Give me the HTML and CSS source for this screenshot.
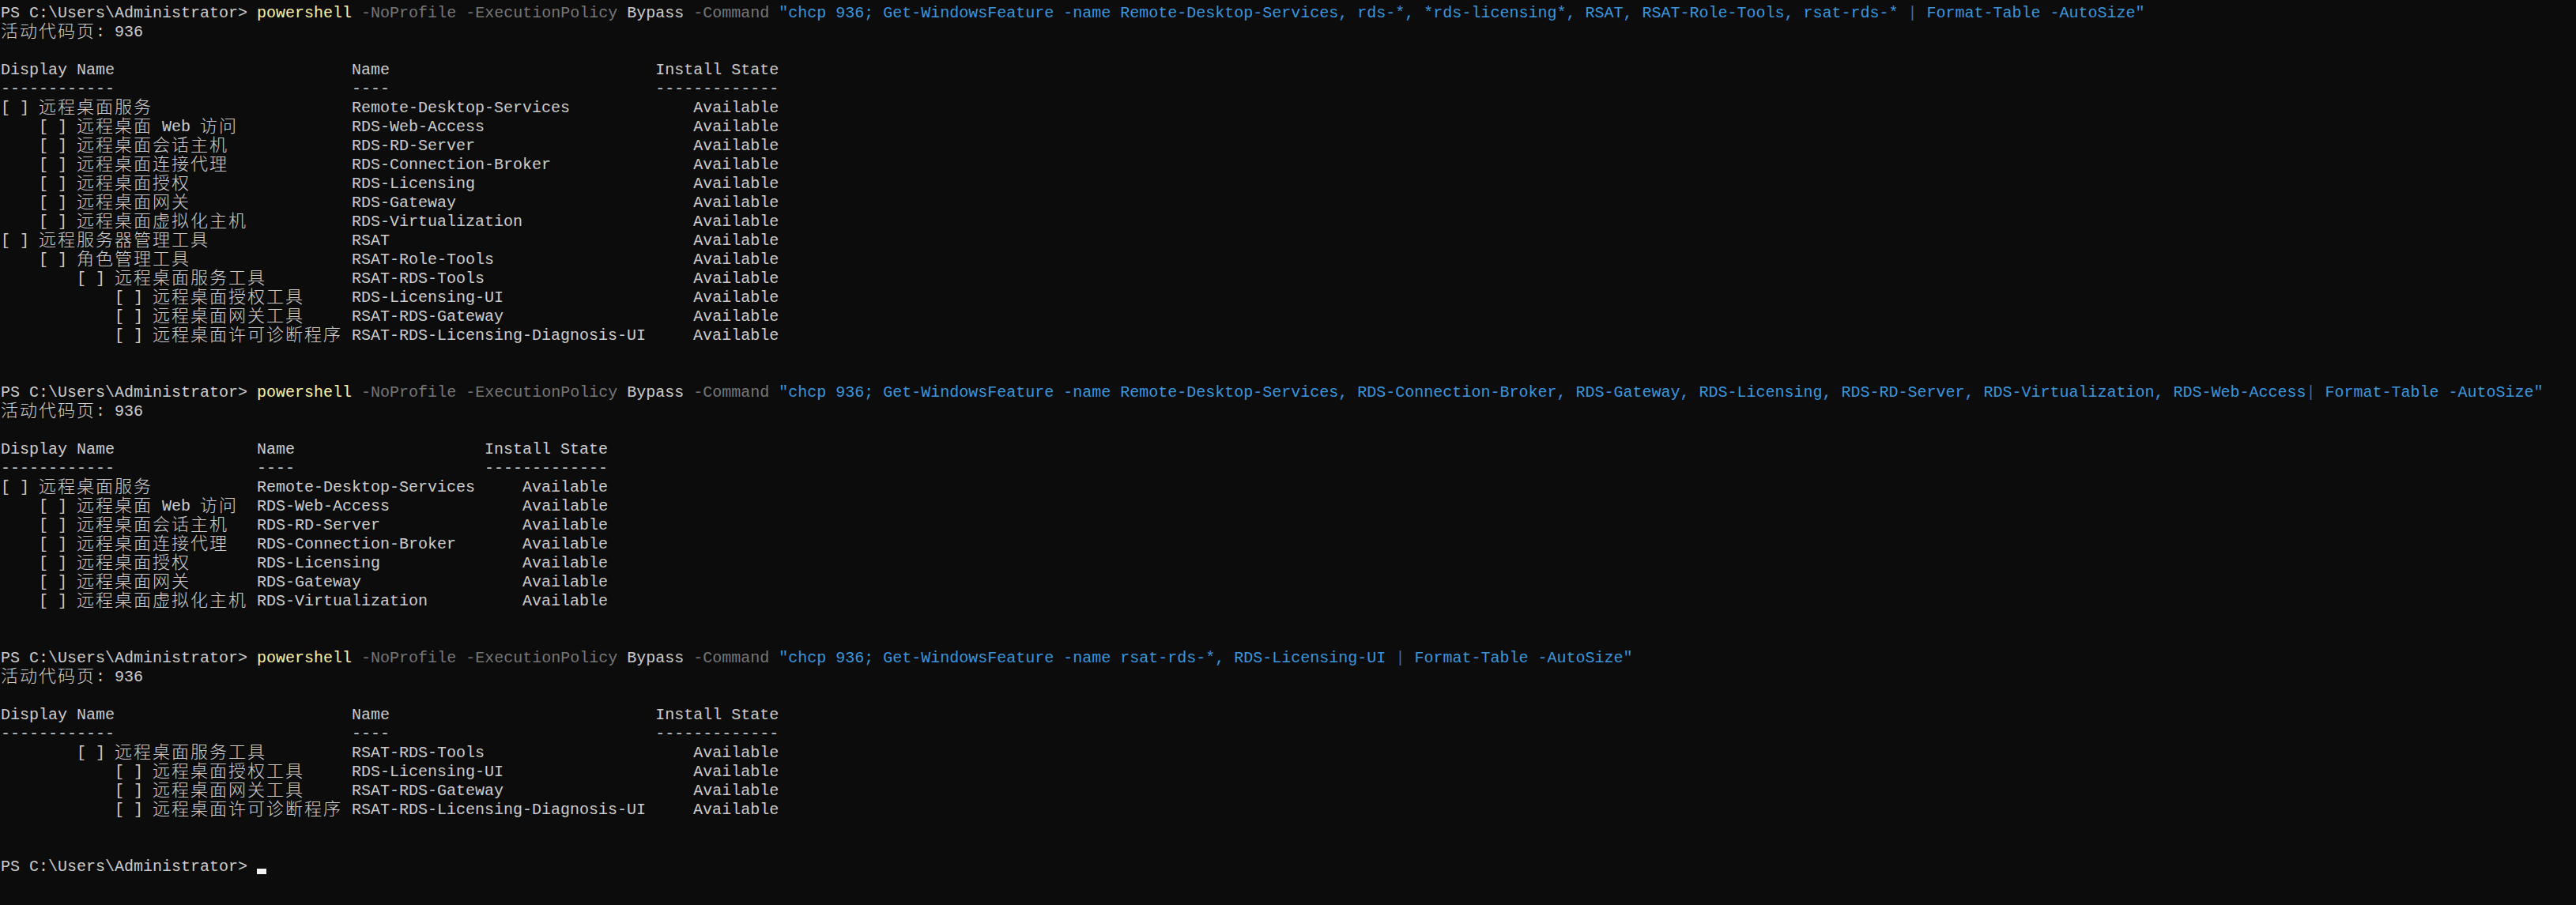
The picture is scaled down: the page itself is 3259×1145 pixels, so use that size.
FILE: index.html
```html
<!DOCTYPE html>
<html lang="zh-CN">
<head>
<meta charset="utf-8">
<title>Windows PowerShell</title>
<link rel="stylesheet" href="styles.css">
</head>
<body>
<main class="term">
<div class="l">PS C:\Users\Administrator&gt; <span class="y">powershell</span> <span class="g">-NoProfile</span> <span class="g">-ExecutionPolicy</span> Bypass <span class="g">-Command</span> <span class="s">"chcp 936; Get-WindowsFeature -name Remote-Desktop-Services, rds-*, *rds-licensing*, RSAT, RSAT-Role-Tools, rsat-rds-* <span class="p">|</span> Format-Table -AutoSize"</span></div>
<div class="l"><span class="z">活动代码页</span>: 936</div>
<div class="l"></div>
<div class="l">Display Name                         Name                            Install State</div>
<div class="l">------------                         ----                            -------------</div>
<div class="l">[ ] <span class="z">远程桌面服务</span>                     Remote-Desktop-Services             Available</div>
<div class="l">    [ ] <span class="z">远程桌面</span> Web <span class="z">访问</span>            RDS-Web-Access                      Available</div>
<div class="l">    [ ] <span class="z">远程桌面会话主机</span>             RDS-RD-Server                       Available</div>
<div class="l">    [ ] <span class="z">远程桌面连接代理</span>             RDS-Connection-Broker               Available</div>
<div class="l">    [ ] <span class="z">远程桌面授权</span>                 RDS-Licensing                       Available</div>
<div class="l">    [ ] <span class="z">远程桌面网关</span>                 RDS-Gateway                         Available</div>
<div class="l">    [ ] <span class="z">远程桌面虚拟化主机</span>           RDS-Virtualization                  Available</div>
<div class="l">[ ] <span class="z">远程服务器管理工具</span>               RSAT                                Available</div>
<div class="l">    [ ] <span class="z">角色管理工具</span>                 RSAT-Role-Tools                     Available</div>
<div class="l">        [ ] <span class="z">远程桌面服务工具</span>         RSAT-RDS-Tools                      Available</div>
<div class="l">            [ ] <span class="z">远程桌面授权工具</span>     RDS-Licensing-UI                    Available</div>
<div class="l">            [ ] <span class="z">远程桌面网关工具</span>     RSAT-RDS-Gateway                    Available</div>
<div class="l">            [ ] <span class="z">远程桌面许可诊断程序</span> RSAT-RDS-Licensing-Diagnosis-UI     Available</div>
<div class="l"></div>
<div class="l"></div>
<div class="l">PS C:\Users\Administrator&gt; <span class="y">powershell</span> <span class="g">-NoProfile</span> <span class="g">-ExecutionPolicy</span> Bypass <span class="g">-Command</span> <span class="s">"chcp 936; Get-WindowsFeature -name Remote-Desktop-Services, RDS-Connection-Broker, RDS-Gateway, RDS-Licensing, RDS-RD-Server, RDS-Virtualization, RDS-Web-Access<span class="p">|</span> Format-Table -AutoSize"</span></div>
<div class="l"><span class="z">活动代码页</span>: 936</div>
<div class="l"></div>
<div class="l">Display Name               Name                    Install State</div>
<div class="l">------------               ----                    -------------</div>
<div class="l">[ ] <span class="z">远程桌面服务</span>           Remote-Desktop-Services     Available</div>
<div class="l">    [ ] <span class="z">远程桌面</span> Web <span class="z">访问</span>  RDS-Web-Access              Available</div>
<div class="l">    [ ] <span class="z">远程桌面会话主机</span>   RDS-RD-Server               Available</div>
<div class="l">    [ ] <span class="z">远程桌面连接代理</span>   RDS-Connection-Broker       Available</div>
<div class="l">    [ ] <span class="z">远程桌面授权</span>       RDS-Licensing               Available</div>
<div class="l">    [ ] <span class="z">远程桌面网关</span>       RDS-Gateway                 Available</div>
<div class="l">    [ ] <span class="z">远程桌面虚拟化主机</span> RDS-Virtualization          Available</div>
<div class="l"></div>
<div class="l"></div>
<div class="l">PS C:\Users\Administrator&gt; <span class="y">powershell</span> <span class="g">-NoProfile</span> <span class="g">-ExecutionPolicy</span> Bypass <span class="g">-Command</span> <span class="s">"chcp 936; Get-WindowsFeature -name rsat-rds-*, RDS-Licensing-UI <span class="p">|</span> Format-Table -AutoSize"</span></div>
<div class="l"><span class="z">活动代码页</span>: 936</div>
<div class="l"></div>
<div class="l">Display Name                         Name                            Install State</div>
<div class="l">------------                         ----                            -------------</div>
<div class="l">        [ ] <span class="z">远程桌面服务工具</span>         RSAT-RDS-Tools                      Available</div>
<div class="l">            [ ] <span class="z">远程桌面授权工具</span>     RDS-Licensing-UI                    Available</div>
<div class="l">            [ ] <span class="z">远程桌面网关工具</span>     RSAT-RDS-Gateway                    Available</div>
<div class="l">            [ ] <span class="z">远程桌面许可诊断程序</span> RSAT-RDS-Licensing-Diagnosis-UI     Available</div>
<div class="l"></div>
<div class="l"></div>
<div class="l">PS C:\Users\Administrator&gt; <span class="cursor"></span></div>
</main>
</body>
</html>
```
FILE: styles.css
```css
html, body {
  margin: 0;
  padding: 0;
  background: #0c0c0c;
  height: 100%;
  overflow: hidden;
}
.term {
  padding: 5px 0 0 1px;
  color: #cccccc;
  font-family: "Liberation Mono", "DejaVu Sans Mono", monospace;
  font-size: 20px;
}
.l {
  height: 24px;
  line-height: 24px;
  white-space: pre;
}
.z {
  display: inline-block;
  height: 24px;
  line-height: 16px;
  vertical-align: top;
  font-family: "Noto Sans CJK SC", "Noto Sans CJK JP", sans-serif;
  font-size: 22px;
  letter-spacing: 2px;
  font-weight: 300;
}
.y { color: #f9f1a5; }
.g { color: #767676; }
.s { color: #3a96dd; }
.p { color: #3a6f9a; }
.cursor {
  display: inline-block;
  width: 12px;
  height: 7px;
  background: #f2f2f2;
  vertical-align: -4px;
}
```
